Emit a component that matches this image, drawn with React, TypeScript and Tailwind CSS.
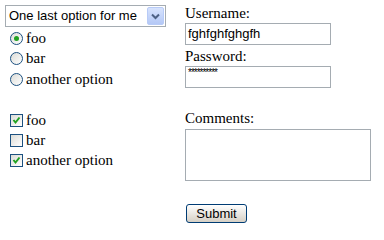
import React from 'react'

const masked = '*'.repeat(10)

function Radio({ checked }: { checked?: boolean }) {
  return (
    <span className="inline-flex w-[13px] h-[13px] rounded-full border border-[#1c5180] bg-gradient-to-br from-[#dcdcd7] to-white items-center justify-center mr-[3px] shrink-0">
      {checked && <span className="w-[5px] h-[5px] rounded-full bg-[#21a121]" />}
    </span>
  )
}

function Check({ checked }: { checked?: boolean }) {
  return (
    <span className="inline-flex w-[13px] h-[13px] border border-[#1c5180] bg-gradient-to-br from-[#dcdcd7] to-white items-center justify-center mr-[3px] shrink-0">
      {checked && (
        <svg width="9" height="9" viewBox="0 0 9 9">
          <path d="M1.5 4 L3.5 6.5 L7.5 1.5" stroke="#21a121" strokeWidth="2" fill="none" />
        </svg>
      )}
    </span>
  )
}

export default function App() {
  return (
    <div className="w-[384px] h-[236px] bg-white flex text-black text-[15px] font-['Liberation_Serif',serif]">
      <div className="w-[180px] pl-[5px] pt-[5px] flex flex-col">
        <div className="w-[161px] h-[22px] border border-[#a5acb2] flex items-center justify-between pl-[3px] pr-[1px]">
          <span className="text-[13px] font-['Liberation_Sans',sans-serif]">One last option for me</span>
          <span className="w-[17px] h-[18px] rounded-[2px] border border-[#b8cbf7] bg-gradient-to-b from-[#d7e3fd] to-[#b4c8f6] flex items-center justify-center">
            <svg width="9" height="7" viewBox="0 0 9 7">
              <path d="M1 1.5 L4.5 5 L8 1.5" stroke="#4d6185" strokeWidth="2" fill="none" />
            </svg>
          </span>
        </div>
        <div className="flex flex-col pl-[5px] pt-[1px]">
          <label className="h-[20px] flex items-center"><Radio checked />foo</label>
          <label className="h-[21px] flex items-center"><Radio />bar</label>
          <label className="h-[20px] flex items-center"><Radio />another option</label>
        </div>
        <div className="flex flex-col pl-[5px] mt-[21px]">
          <label className="h-[20px] flex items-center"><Check checked />foo</label>
          <label className="h-[20px] flex items-center"><Check />bar</label>
          <label className="h-[20px] flex items-center"><Check checked />another option</label>
        </div>
      </div>
      <div className="pl-[5px] pt-[3px] flex flex-col items-start">
        <div className="h-[20px] leading-[20px]">Username:</div>
        <div className="w-[146px] h-[22px] border border-[#a5acb2] flex items-center px-[2px] text-[13px] font-['Liberation_Sans',sans-serif]">
          fghfghfghgfh
        </div>
        <div className="h-[20px] leading-[20px] mt-[1px]">Password:</div>
        <div className="w-[146px] h-[22px] border border-[#a5acb2] flex items-start px-[2px] pt-[1px] text-[10px] tracking-[-1px] leading-[10px] font-['Liberation_Sans',sans-serif]">
          {masked}
        </div>
        <div className="h-[20px] leading-[20px] mt-[20px]">Comments:</div>
        <div className="w-[186px] h-[52px] border border-[#a5acb2] mt-[1px]" />
        <button className="mt-[23px] ml-[1px] w-[61px] h-[19px] rounded-[3px] border border-[#003c74] bg-gradient-to-b from-white to-[#d6d0c5] text-[13px] leading-none flex items-center justify-center font-['Liberation_Sans',sans-serif]">
          Submit
        </button>
      </div>
    </div>
  )
}
